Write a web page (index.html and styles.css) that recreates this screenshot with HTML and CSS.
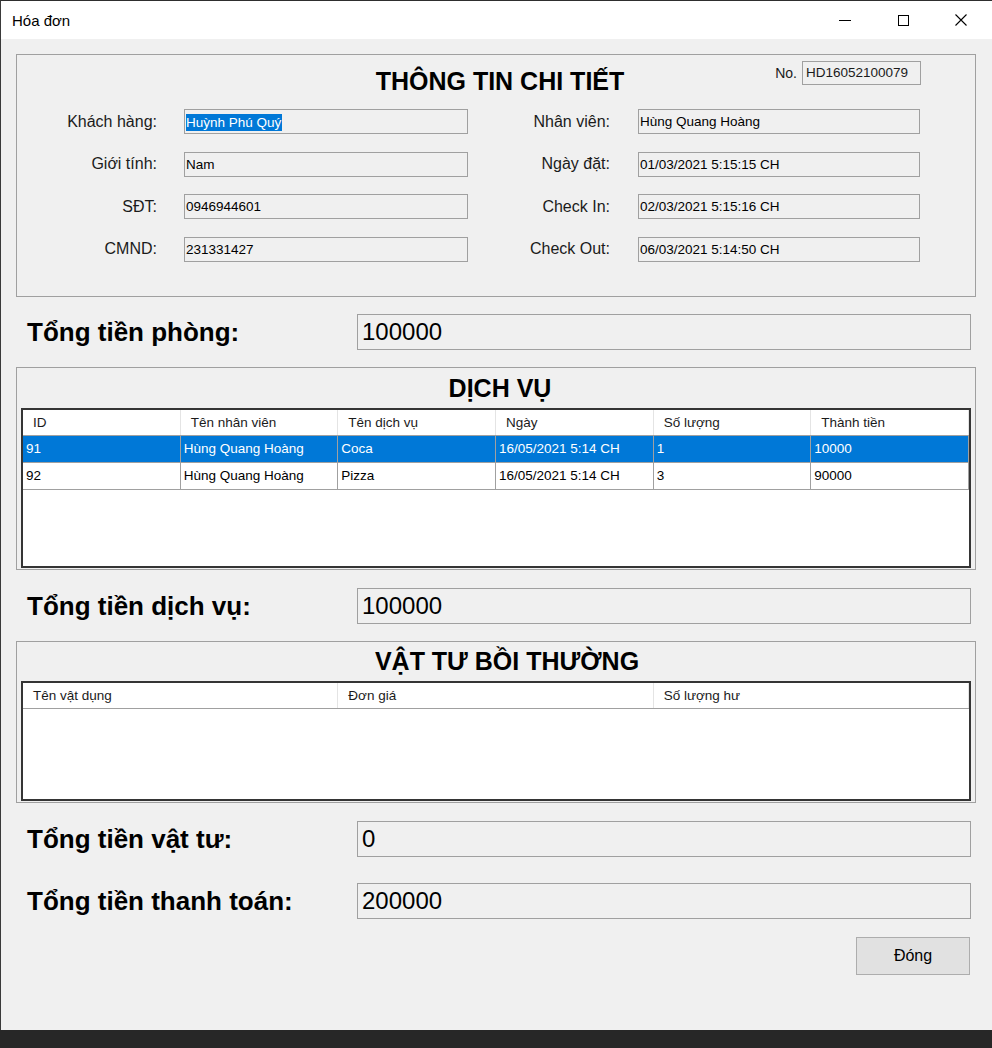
FILE: index.html
```html
<!DOCTYPE html>
<html lang="vi">
<head>
<meta charset="utf-8">
<title>Hóa đơn</title>
<link rel="stylesheet" href="styles.css">
</head>
<body>
<div class="window">
  <div class="titlebar">
    <span class="title">Hóa đơn</span>
    <div class="controls">
      <span class="ctl"><svg width="12" height="12" viewBox="0 0 12 12"><line x1="0" y1="6.5" x2="12" y2="6.5" stroke="#000" stroke-width="1"/></svg></span>
      <span class="ctl"><svg width="12" height="12" viewBox="0 0 12 12"><rect x="1.5" y="1.5" width="10" height="10" fill="none" stroke="#000" stroke-width="1"/></svg></span>
      <span class="ctl"><svg width="12" height="12" viewBox="0 0 12 12"><path d="M0.5 0.5 L11.5 11.5 M11.5 0.5 L0.5 11.5" stroke="#000" stroke-width="1.1" fill="none"/></svg></span>
    </div>
  </div>

  <div class="client">
    <section class="group gb-info">
      <div class="info-head">
        <h1 class="gtitle">THÔNG TIN CHI TIẾT</h1>
        <div class="no"><span>No.</span><span class="tb tb-no">HD16052100079</span></div>
      </div>
      <div class="info-grid">
        <span class="lbl lbl-l">Khách hàng:</span>
        <div class="tb"><span class="selected">Huỳnh Phú Quý</span></div>
        <span class="lbl lbl-r">Nhân viên:</span>
        <div class="tb">Hùng Quang Hoàng</div>

        <span class="lbl lbl-l">Giới tính:</span>
        <div class="tb">Nam</div>
        <span class="lbl lbl-r">Ngày đặt:</span>
        <div class="tb">01/03/2021 5:15:15 CH</div>

        <span class="lbl lbl-l">SĐT:</span>
        <div class="tb">0946944601</div>
        <span class="lbl lbl-r">Check In:</span>
        <div class="tb">02/03/2021 5:15:16 CH</div>

        <span class="lbl lbl-l">CMND:</span>
        <div class="tb">231331427</div>
        <span class="lbl lbl-r">Check Out:</span>
        <div class="tb">06/03/2021 5:14:50 CH</div>
      </div>
    </section>

    <div class="total t1">
      <span class="tlabel">Tổng tiền phòng:</span>
      <div class="big">100000</div>
    </div>

    <section class="group gb-dv">
      <h2 class="gtitle">DỊCH VỤ</h2>
      <div class="dgv dgv-dv">
        <div class="drow head cols6">
          <div>ID</div><div>Tên nhân viên</div><div>Tên dịch vụ</div><div>Ngày</div><div>Số lượng</div><div>Thành tiền</div>
        </div>
        <div class="drow row cols6 sel">
          <div>91</div><div>Hùng Quang Hoàng</div><div>Coca</div><div>16/05/2021 5:14 CH</div><div>1</div><div>10000</div>
        </div>
        <div class="drow row cols6">
          <div>92</div><div>Hùng Quang Hoàng</div><div>Pizza</div><div>16/05/2021 5:14 CH</div><div>3</div><div>90000</div>
        </div>
      </div>
    </section>

    <div class="total t2">
      <span class="tlabel">Tổng tiền dịch vụ:</span>
      <div class="big">100000</div>
    </div>

    <section class="group gb-vt">
      <h2 class="gtitle gtitle-vt">VẬT TƯ BỒI THƯỜNG</h2>
      <div class="dgv dgv-vt">
        <div class="drow head cols3">
          <div>Tên vật dụng</div><div>Đơn giá</div><div>Số lượng hư</div>
        </div>
      </div>
    </section>

    <div class="total t3">
      <span class="tlabel">Tổng tiền vật tư:</span>
      <div class="big">0</div>
    </div>

    <div class="total t4">
      <span class="tlabel">Tổng tiền thanh toán:</span>
      <div class="big">200000</div>
    </div>

    <div class="actions">
      <button class="btn" type="button">Đóng</button>
    </div>
  </div>
</div>
<div class="taskbar"></div>
</body>
</html>
```

FILE: styles.css
```css
html, body {
  margin: 0;
  padding: 0;
}
body {
  background: #262626;
  font-family: "Liberation Sans", Arial, sans-serif;
  color: #000;
}

.window {
  width: 992px;
  height: 1030px;
  box-sizing: border-box;
  border-top: 1px solid #2e2e2e;
  border-left: 1px solid #3a3a3a;
  background: #f0f0f0;
  display: flex;
  flex-direction: column;
}

.titlebar {
  height: 38px;
  flex: 0 0 38px;
  background: #fff;
  display: flex;
  align-items: center;
}
.title {
  padding-left: 11px;
  font-size: 15px;
  color: #000;
}
.controls {
  margin-left: auto;
  display: flex;
  height: 100%;
  padding-right: 2px;
}
.ctl {
  width: 58px;
  display: flex;
  align-items: center;
  justify-content: center;
}

.client {
  flex: 1;
  padding: 0 16px 0 15px;
  display: flex;
  flex-direction: column;
}

.group {
  border: 1px solid #a0a0a0;
  box-sizing: border-box;
}
.gtitle {
  margin: 0;
  font-size: 25px;
  line-height: 29px;
  font-weight: bold;
  text-align: center;
  padding-left: 8px;
}

/* info group */
.gb-info {
  margin-top: 15px;
  height: 243px;
}
.info-head {
  display: grid;
  grid-template-columns: 1fr auto 1fr;
  align-items: start;
  padding-top: 6px;
}
.info-head .gtitle {
  grid-column: 2;
  margin-top: 6px;
}
.no {
  grid-column: 3;
  justify-self: end;
  margin-right: 54px;
  display: flex;
  align-items: center;
  gap: 5px;
  font-size: 14px;
  color: #1b1b1b;
}
.info-grid {
  margin-top: 13px;
  display: grid;
  grid-template-columns: 167px 284px 170px 282px;
  grid-template-rows: repeat(4, 25px);
  row-gap: 17.67px;
  align-items: center;
}
.lbl {
  text-align: right;
  font-size: 16px;
  color: #1b1b1b;
  white-space: nowrap;
}
.lbl-l { padding-right: 27px; }
.lbl-r { padding-right: 28px; }

.tb {
  height: 25px;
  box-sizing: border-box;
  border: 1px solid #a0a0a0;
  background: #f0f0f0;
  font-size: 13.5px;
  line-height: 23px;
  padding-left: 1px;
  white-space: nowrap;
  overflow: hidden;
}
.tb-no {
  width: 119px;
  height: 24px;
  line-height: 22px;
  padding-left: 3px;
}
.selected {
  display: inline-block;
  background: #0078d7;
  color: #fff;
  line-height: 17px;
  vertical-align: middle;
  padding-right: 1px;
}

/* totals */
.total {
  display: flex;
  align-items: center;
  padding: 0 5px 0 11px;
}
.tlabel {
  flex: 0 0 330px;
  font-size: 26px;
  font-weight: bold;
  white-space: nowrap;
}
.big {
  flex: 1;
  height: 36px;
  box-sizing: border-box;
  border: 1px solid #a0a0a0;
  background: #f0f0f0;
  font-size: 24px;
  line-height: 34px;
  padding-left: 4px;
}
.t1 { margin-top: 17px; }
.t2 { margin-top: 18px; }
.t3 { margin-top: 18px; }
.t4 { margin-top: 26px; }

/* grid groups */
.gb-dv {
  margin-top: 17px;
  height: 203px;
  padding-top: 6px;
}
.gb-vt {
  margin-top: 17px;
  height: 162px;
  padding-top: 5px;
}
.gtitle-vt {
  padding-left: 22px;
}
.dgv {
  margin: 5px 4px 0;
  border: 2px solid #353535;
  background: #fff;
  box-sizing: border-box;
  overflow: hidden;
}
.dgv-dv { height: 160px; }
.dgv-vt { height: 120px; }

.drow {
  display: grid;
  box-sizing: border-box;
  border-bottom: 1px solid #a0a0a0;
  font-size: 13.5px;
  white-space: nowrap;
}
.cols6 { grid-template-columns: repeat(6, 1fr); }
.cols3 { grid-template-columns: repeat(3, 1fr); }

.head {
  height: 26px;
}
.head > div {
  border-right: 1px solid #e4e4e4;
  padding-left: 10px;
  line-height: 25px;
  color: #1b1b1b;
  overflow: hidden;
}
.row {
  height: 27px;
}
.row > div {
  border-right: 1px solid #a0a0a0;
  padding-left: 3px;
  line-height: 26px;
  overflow: hidden;
}
.row.sel {
  background: #0078d7;
  color: #fff;
}

/* button */
.actions {
  display: flex;
  justify-content: flex-end;
  margin-top: 18px;
  padding-right: 6px;
}
.btn {
  width: 114px;
  height: 38px;
  box-sizing: border-box;
  border: 1px solid #adadad;
  background: #e1e1e1;
  font-family: "Liberation Sans", Arial, sans-serif;
  font-size: 16px;
  color: #000;
  padding: 0;
}

.taskbar {
  height: 18px;
  background: #272727;
}
```
